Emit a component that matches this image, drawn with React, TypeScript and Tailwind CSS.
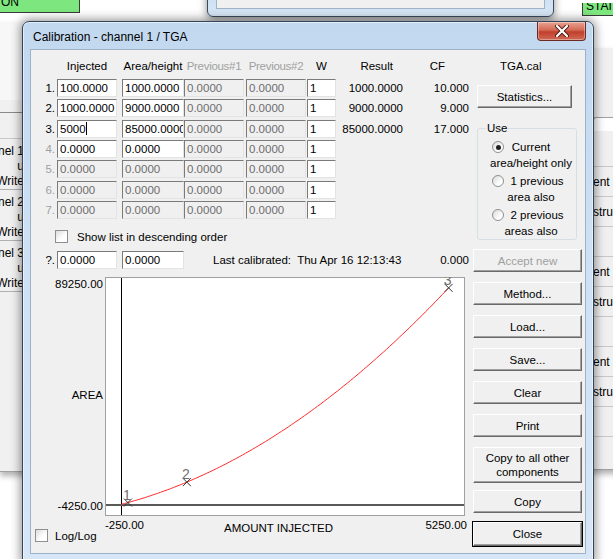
import React from "react";

type Cell = [string, boolean, boolean?];

// edit column widths and the gaps in front of them
const COLS = [
  "w-[60px] ml-[2px]",
  "w-[62px] ml-[5px]",
  "w-[60px] ml-0",
  "w-[60px] ml-[2px]",
  "w-[29px] ml-[1px]",
];

const off: Cell = ["0.0000", false];
const one: Cell = ["1", true];

const ROWS: { no: string; dim?: boolean; cells: Cell[]; result?: string; cf?: string }[] = [
  { no: "1.", cells: [["100.0000", true], ["1000.0000", true], off, off, one], result: "1000.0000", cf: "10.000" },
  { no: "2.", cells: [["1000.0000", true], ["9000.0000", true], off, off, one], result: "9000.0000", cf: "9.000" },
  { no: "3.", cells: [["5000", true, true], ["85000.0000", true], off, off, one], result: "85000.0000", cf: "17.000" },
  { no: "4.", dim: true, cells: [["0.0000", true], ["0.0000", true], off, off, one] },
  { no: "5.", dim: true, cells: [off, off, off, off, one] },
  { no: "6.", dim: true, cells: [off, off, off, off, one] },
  { no: "7.", dim: true, cells: [off, off, off, off, one] },
];

const POINTS: [number, number][] = [
  [100, 1000],
  [1000, 9000],
  [5000, 85000],
];

function Edit({ text, live, caret, cls }: { text: string; live: boolean; caret?: boolean; cls: string }) {
  return (
    <div
      className={`${cls} h-[18px] shrink-0 overflow-hidden whitespace-nowrap border border-t-[#7a7a7a] border-l-[#7a7a7a] border-r-[#e3e3e3] border-b-[#e3e3e3] pl-[2px] leading-[16px] ${
        live ? "bg-white text-black" : "bg-[#f0f0f0] text-[#6d6d6d]"
      }`}
    >
      {text}
      {caret && <span className="inline-block h-[13px] w-px bg-black align-[-2px]" />}
    </div>
  );
}

function Check({ cls }: { cls: string }) {
  return <div className={`${cls} h-[13px] w-[13px] shrink-0 border border-[#8e8f8f] bg-[linear-gradient(135deg,#dcdcdc,#ffffff_60%)]`} />;
}

function Btn({ children, cls, dim, main }: { children: React.ReactNode; cls: string; dim?: boolean; main?: boolean }) {
  return (
    <div
      className={`${cls} flex shrink-0 items-center justify-center border border-t-white border-l-white border-r-[#696969] border-b-[#696969] bg-[#f0f0f0] text-center leading-[14px] shadow-[inset_-1px_-1px_0_#a0a0a0] ${
        dim ? "text-[#a0a0a0]" : "text-black"
      } ${main ? "outline outline-1 outline-black" : ""}`}
    >
      {children}
    </div>
  );
}

function Radio({ on }: { on?: boolean }) {
  return (
    <div className="absolute left-[14px] top-[2px] flex h-[12px] w-[12px] items-center justify-center rounded-full border border-[#8e8f8f] bg-[linear-gradient(135deg,#d8d8d8,#ffffff_70%)]">
      {on && <div className="h-[5px] w-[5px] rounded-full bg-[#202020]" />}
    </div>
  );
}

function Plot() {
  const W = 360;
  const H = 239;
  const px = (x: number) => ((x + 250) * W) / 5500;
  const py = (y: number) => H - ((y + 4250) * H) / 93500;

  // quadratic through the three calibration points
  const [[x1, y1], [x2, y2], [x3, y3]] = POINTS;
  const s1 = (y2 - y1) / (x2 - x1);
  const s2 = (y3 - y2) / (x3 - x2);
  const a = (s2 - s1) / (x3 - x1);
  const b = s1 - a * (x1 + x2);
  const c = y1 - a * x1 * x1 - b * x1;
  const fit = (x: number) => a * x * x + b * x + c;

  const curve = Array.from({ length: 101 }, (_, i) => {
    const x = i * 50;
    return `${px(x).toFixed(1)},${py(fit(x)).toFixed(1)}`;
  }).join(" ");

  const x0 = Math.round(px(0)) + 0.5;
  const y0 = Math.round(py(0));

  return (
    <svg width={W} height={H} className="block shrink-0">
      <rect x={0.5} y={0.5} width={W - 1} height={H - 1} fill="#fff" stroke="#a0a0a0" />
      <line x1={x0} y1={1} x2={x0} y2={H - 1} stroke="#000" />
      <line x1={1} y1={y0} x2={W - 1} y2={y0} stroke="#5a5a5a" strokeWidth={2} />
      <polyline points={curve} fill="none" stroke="#ff2a2a" strokeWidth={1} />
      {POINTS.map(([x, y], i) => {
        const mx = px(x);
        const my = py(y);
        return (
          <g key={i}>
            <line x1={mx - 4} y1={my - 4} x2={mx + 4} y2={my + 4} stroke="#333" />
            <line x1={mx - 4} y1={my + 4} x2={mx + 4} y2={my - 4} stroke="#333" />
            <text x={mx - 1} y={my - 3} fontSize={14} fill="#707070" textAnchor="middle" fontFamily="Liberation Sans, Arial, sans-serif">
              {i + 1}
            </text>
          </g>
        );
      })}
    </svg>
  );
}

function LeftWindow() {
  return (
    <div className="absolute left-0 top-[22px] flex h-[450px] w-[40px] flex-col overflow-hidden border-b border-[#a0a0a0] bg-[#f0f0f0] text-[12px] leading-[14px] text-black shadow-[0_4px_6px_rgba(0,0,0,0.3)]">
      <div className="h-[78px] bg-[#f7f7f7]" />
      <div className="h-[13px] border-b border-[#8a8a8a]" />
      <div className="h-[26px] border-b border-[#c8c8c8]" />
      {[1, 2, 3].map((n) => (
        <div key={n} className="flex h-[51px] flex-col border-b border-[#b0b0b0] pt-[5px]">
          {[`Channel ${n}`, "u", "Write"].map((t, i) => (
            <div key={i} className="flex h-[16px] w-[24px] justify-end overflow-hidden whitespace-nowrap">
              {t}
            </div>
          ))}
        </div>
      ))}
      <div className="flex-1" />
    </div>
  );
}

function RightWindow() {
  const cells = ["ent", "stru", "", "ent", "stru", "", "ent", "stru", ""];
  return (
    <div className="absolute left-[585px] top-[48px] flex h-[422px] w-[40px] flex-col overflow-hidden border-b border-[#a0a0a0] bg-[#f0f0f0] pl-[8px] text-[12px] leading-[14px] text-black shadow-[0_4px_6px_rgba(0,0,0,0.3)]">
      <div className="h-[69px]" />
      <div className="h-[14px] rounded-tl-[3px] border-l border-t border-[#a0a0a0] bg-white" />
      <div className="h-[36px] border-b border-[#c8c8c8]" />
      {cells.map((t, i) => (
        <div key={i} className="flex h-[30px] items-center overflow-hidden whitespace-nowrap border-b border-[#c8c8c8]">
          {t}
        </div>
      ))}
    </div>
  );
}

export default function App() {
  return (
    <div className="relative h-[559px] w-[613px] overflow-hidden bg-white font-['Liberation_Sans',Arial,sans-serif] text-black">
      {/* windows behind the dialog */}
      <div className="absolute left-0 top-0 h-[13px] w-[80px] overflow-hidden border-b border-r border-[#3a3a3a] bg-[#7ee67e] text-[12px] leading-[12px]">
        <div className="-mt-[4px] pl-[1px]">ON</div>
      </div>
      <div className="absolute left-[582px] top-[3px] h-[13px] w-[40px] overflow-hidden border-b border-l border-[#3a3a3a] bg-[#7ee67e] text-[12px] leading-[12px]">
        <div className="-mt-[3px] pl-[3px]">STAI</div>
      </div>
      <LeftWindow />
      <RightWindow />
      <div className="absolute left-[207px] top-[-12px] flex h-[29px] w-[347px] flex-col rounded-b-[6px] border border-[#3b4a5e] bg-[linear-gradient(180deg,#c8dcf1,#d8e7f6)] px-[8px] pb-[7px] shadow-[0_3px_8px_rgba(0,0,0,0.45)]">
        <div className="flex-1 border border-[#9fb2c8] bg-[#f0f0f0]" />
      </div>

      {/* Calibration dialog */}
      <div className="absolute left-[22px] top-[21px] flex h-[541px] w-[572px] flex-col rounded-t-[7px] border border-[#34445a] bg-[linear-gradient(180deg,#c2d8ef_0%,#cde0f4_40%,#d6e6f6_100%)] shadow-[0_0_10px_2px_rgba(0,0,0,0.4),inset_0_0_0_1px_rgba(255,255,255,0.55)]">
        <div className="relative flex h-[28px] shrink-0 items-center pl-[10px] pt-[1px] text-[12px] leading-[14px] text-black">
          Calibration - channel 1 / TGA
          <div className="absolute right-[7px] top-0 flex h-[19px] w-[49px] items-center justify-center rounded-b-[4px] border border-t-0 border-[#6b2b22] bg-[linear-gradient(180deg,#e9a291_0%,#d36a55_45%,#c13e2c_55%,#cf6a55_100%)] shadow-[inset_0_0_0_1px_rgba(255,255,255,0.35)]">
            <svg width="14" height="12" viewBox="0 0 14 12">
              <path d="M2 1 L12 11 M12 1 L2 11" stroke="#4a1a14" strokeWidth="4" strokeLinecap="round" />
              <path d="M2 1 L12 11 M12 1 L2 11" stroke="#fff" strokeWidth="2.2" strokeLinecap="round" />
            </svg>
          </div>
        </div>

        <div className="mx-[8px] flex h-[503px] shrink-0 bg-[#f0f0f0] text-[11.5px] leading-[14px] shadow-[0_0_0_1px_#9db1c8]">
          {/* left: point table and plot */}
          <div className="flex w-[440px] shrink-0 flex-col">
            <div className="mt-[9px] flex h-[14px] whitespace-nowrap">
              <div className="w-[26px] shrink-0" />
              <div className="w-[60px] shrink-0 text-center">Injected</div>
              <div className="ml-[5px] w-[62px] shrink-0 text-center">Area/height</div>
              <div className="w-[60px] shrink-0 text-center tracking-[-0.3px] text-[#a0a0a0]">Previous#1</div>
              <div className="ml-[2px] w-[60px] shrink-0 text-center tracking-[-0.3px] text-[#a0a0a0]">Previous#2</div>
              <div className="ml-[1px] w-[29px] shrink-0 text-center">W</div>
              <div className="w-[67px] shrink-0 pr-[10px] text-right">Result</div>
              <div className="w-[66px] shrink-0 pr-[24px] text-right">CF</div>
            </div>

            <div className="mt-[6px] flex flex-col gap-[2.33px]">
              {ROWS.map((r) => (
                <div key={r.no} className="flex h-[18px] items-center whitespace-nowrap">
                  <div className={`w-[24px] shrink-0 text-right ${r.dim ? "text-[#a0a0a0]" : "text-black"}`}>{r.no}</div>
                  {r.cells.map(([t, live, caret], i) => (
                    <Edit key={i} text={t} live={live} caret={caret} cls={COLS[i]} />
                  ))}
                  <div className="w-[67px] shrink-0 text-right">{r.result}</div>
                  <div className="w-[66px] shrink-0 text-right">{r.cf}</div>
                </div>
              ))}
            </div>

            <div className="mt-[11px] flex h-[14px] items-center">
              <Check cls="ml-[24px]" />
              <div className="ml-[9px] whitespace-nowrap">Show list in descending order</div>
            </div>

            <div className="mt-[7px] flex h-[18px] items-center whitespace-nowrap">
              <div className="w-[24px] shrink-0 text-right">?.</div>
              <Edit text="0.0000" live cls={COLS[0]} />
              <Edit text="0.0000" live cls={COLS[1]} />
              <div className="ml-[29px]">Last calibrated:&nbsp; Thu Apr 16 12:13:43</div>
              <div className="flex-1 pr-[2px] text-right">0.000</div>
            </div>

            <div className="mt-[8px] flex">
              <div className="flex w-[74px] shrink-0 flex-col pr-[2px] text-right">
                <div>89250.00</div>
                <div className="mt-[97px]">AREA</div>
                <div className="mt-[97px]">-4250.00</div>
              </div>
              <Plot />
            </div>

            <div className="flex">
              <div className="flex w-[74px] shrink-0 items-center pl-[4px] pt-[13px]">
                <Check cls="" />
                <div className="ml-[7px]">Log/Log</div>
              </div>
              <div className="mt-[2px] flex w-[362px] shrink-0 items-start whitespace-nowrap">
                <div>-250.00</div>
                <div className="ml-[80px] mt-[3px]">AMOUNT INJECTED</div>
                <div className="ml-auto">5250.00</div>
              </div>
            </div>
          </div>

          {/* right: file, options and commands */}
          <div className="ml-[2px] flex w-[110px] shrink-0 flex-col">
            <div className="mt-[9px] h-[14px] pl-[27px]">TGA.cal</div>
            <Btn cls="ml-[4px] mt-[12px] h-[23px] w-[95px]">Statistics...</Btn>

            <fieldset className="ml-[4px] mt-[13px] h-[119px] w-[100px] rounded-[3px] border border-[#d5dfe5] pb-[1px] pt-[4px]">
              <legend className="ml-[8px] px-[1px] leading-[14px]">Use</legend>
              <div className="flex flex-col gap-[2px] leading-[16px]">
                <div className="relative pl-[8px] text-center">
                  <Radio on />
                  <div>Current</div>
                  <div>area/height only</div>
                </div>
                <div className="relative pl-[8px] text-center">
                  <Radio />
                  <div className="pl-[12px]">1 previous</div>
                  <div>area also</div>
                </div>
                <div className="relative pl-[8px] text-center">
                  <Radio />
                  <div className="pl-[12px]">2 previous</div>
                  <div>areas also</div>
                </div>
              </div>
            </fieldset>

            <Btn cls="mt-[9px] h-[23px] w-[109px]" dim>
              Accept new
            </Btn>
            <Btn cls="mt-[10px] h-[23px] w-[109px]">Method...</Btn>
            <Btn cls="mt-[10px] h-[23px] w-[109px]">Load...</Btn>
            <Btn cls="mt-[10px] h-[23px] w-[109px]">Save...</Btn>
            <Btn cls="mt-[10px] h-[23px] w-[109px]">Clear</Btn>
            <Btn cls="mt-[10px] h-[23px] w-[109px]">Print</Btn>
            <Btn cls="mt-[10px] h-[36px] w-[109px]">
              Copy to all other
              <br />
              components
            </Btn>
            <Btn cls="mt-[7px] h-[23px] w-[109px]">Copy</Btn>
            <Btn cls="mt-[9px] h-[24px] w-[109px]" main>
              Close
            </Btn>
          </div>
        </div>
      </div>
    </div>
  );
}
